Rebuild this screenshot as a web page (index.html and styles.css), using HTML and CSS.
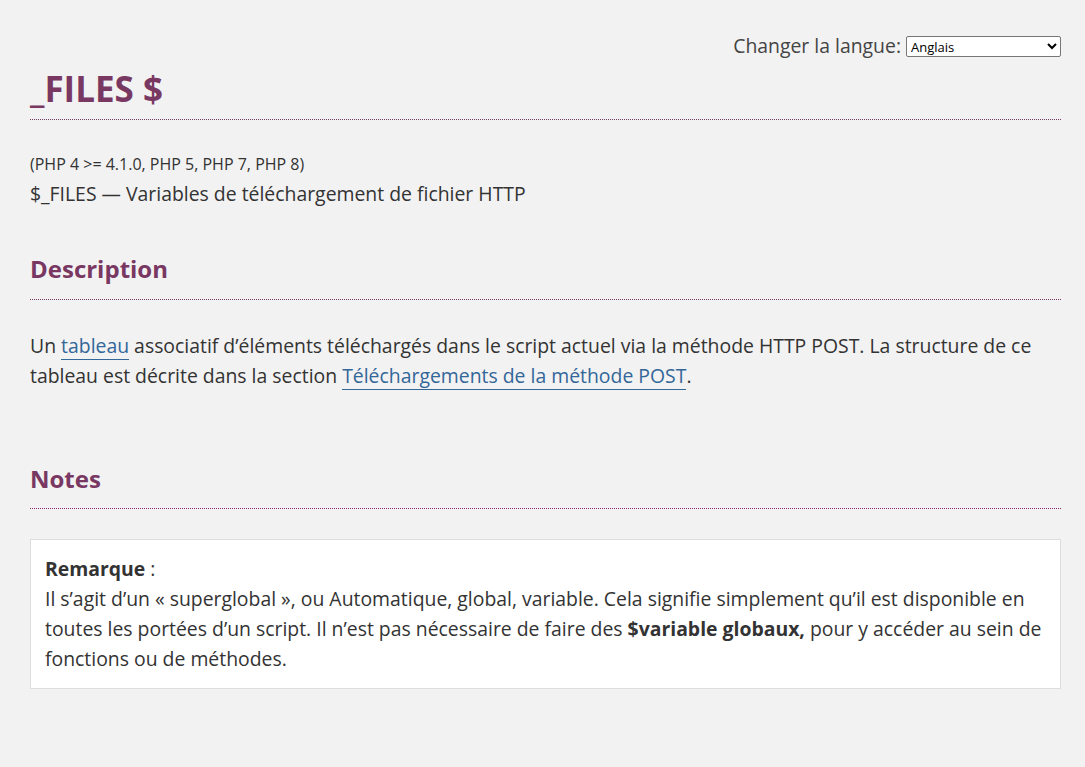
FILE: index.html
```html
<!DOCTYPE html>
<html lang="fr">
<head>
  <meta charset="UTF-8" />
  <meta name="viewport" content="width=device-width, initial-scale=1" />
  <title>PHP: $_FILES - Manual</title>
  <link rel="stylesheet" href="styles.css">
</head>
<body>
  <div class="page">
    <div class="change-language">
      <label for="changelang-langs">Changer la langue:</label>
      <select id="changelang-langs" name="changelang">
        <option value="en" selected>Anglais</option>
        <option value="de">Allemand</option>
        <option value="es">Espagnol</option>
        <option value="fr">Français</option>
        <option value="ja">Japonais</option>
      </select>
    </div>

    <h1 class="refname">_FILES $</h1>

    <div class="refnamediv">
      <p class="verinfo">(PHP 4 &gt;= 4.1.0, PHP 5, PHP 7, PHP 8)</p>
      <p class="refpurpose">$_FILES — Variables de téléchargement de fichier HTTP</p>
    </div>

    <div class="refsect">
      <h2 class="title">Description</h2>
      <p class="para">
        Un <a href="#">tableau</a> associatif d’éléments téléchargés dans le script actuel
        via la méthode HTTP POST. La structure de ce tableau est décrite dans la section
        <a href="#">Téléchargements de la méthode POST</a>.
      </p>
    </div>

    <div class="refsect">
      <h2 class="title notes">Notes</h2>
      <div class="note">
        <strong>Remarque</strong> :<br>
        Il s’agit d’un « superglobal », ou Automatique, global, variable. Cela signifie
        simplement qu’il est disponible en toutes les portées d’un script. Il n’est pas
        nécessaire de faire des <strong>$variable globaux,</strong> pour y accéder au sein de
        fonctions ou de méthodes.
      </div>
    </div>

    <div class="refsect">
      <h2 class="title">Voir aussi</h2>
    </div>
  </div>
</body>
</html>
```

FILE: styles.css
```css
html {
  background-color: #f2f2f2;
}

body {
  margin: 0;
  font-family: "Open Sans", "Noto Sans", sans-serif;
  font-size: 19.4px;
  color: #333;
}

.page {
  padding: 0 24px 0 30px;
}

.change-language {
  display: flex;
  justify-content: flex-end;
  align-items: center;
  gap: 5px;
  height: 21px;
  margin-top: 36px;
  color: #444;
}

.change-language label {
  position: relative;
  top: -1px;
}

.change-language select {
  width: 155px;
  height: 21px;
  font-family: "Open Sans", sans-serif;
  font-size: 13px;
  border: 1px solid #777;
  border-radius: 2px;
  background: #fff;
  color: #000;
}

.refname {
  margin: 9px 0 0;
  padding-bottom: 8px;
  font-size: 35px;
  line-height: 45px;
  color: #793862;
  border-bottom: 1px dotted #793862;
}

.refnamediv {
  margin-top: 32px;
}

.verinfo {
  margin: 0;
  font-size: 16px;
  line-height: 24px;
}

.refpurpose {
  margin: 4px 0 0;
  line-height: 28px;
}

.refsect {
  margin-top: 45px;
}

.refsect + .refsect {
  margin-top: 72px;
}

.title {
  margin: 0;
  padding-bottom: 14px;
  font-size: 24px;
  line-height: 32px;
  color: #793862;
  border-bottom: 1px dotted #793862;
}

.title.notes {
  padding-bottom: 13px;
  border-bottom-color: #8a2a72;
}

.para {
  margin: 31px 0 0;
  line-height: 30px;
}

.para a {
  color: #369;
  text-decoration: none;
  border-bottom: 1px solid #369;
}

.note {
  margin-top: 30px;
  padding: 14px;
  background: #fff;
  border: 1px solid #ddd;
  line-height: 30px;
}
```
